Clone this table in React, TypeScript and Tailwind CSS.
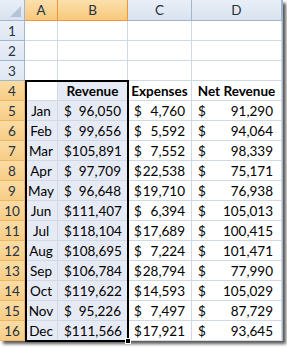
import React from "react";

const data: [string, string, string, string][] = [
  ["Jan", "96,050", "4,760", "91,290"],
  ["Feb", "99,656", "5,592", "94,064"],
  ["Mar", "105,891", "7,552", "98,339"],
  ["Apr", "97,709", "22,538", "75,171"],
  ["May", "96,648", "19,710", "76,938"],
  ["Jun", "111,407", "6,394", "105,013"],
  ["Jul", "118,104", "17,689", "100,415"],
  ["Aug", "108,695", "7,224", "101,471"],
  ["Sep", "106,784", "28,794", "77,990"],
  ["Oct", "119,622", "14,593", "105,029"],
  ["Nov", "95,226", "7,497", "87,729"],
  ["Dec", "111,566", "17,921", "93,645"],
];

const cell = "border-r border-b border-[#d0d7e5] flex items-center text-black";
const sel = "bg-[#e6eaf5]";

function RowHead({ n, active }: { n: number; active: boolean }) {
  return (
    <div
      className={
        "flex items-center justify-center border-r border-b text-[#27313f] " +
        (active
          ? "bg-gradient-to-b from-[#fbdca4] to-[#f7cd86] border-[#f2b562]"
          : "bg-gradient-to-b from-[#e9eff8] to-[#dfe7f3] border-[#9eb6ce]")
      }
    >
      {n}
    </div>
  );
}

function Money({ v, bg, pr }: { v: string; bg?: string; pr: string }) {
  return (
    <div className={cell + " justify-between pl-[6px] " + pr + " " + (bg ?? "")}>
      <span>$</span>
      <span>{v}</span>
    </div>
  );
}

export default function App() {
  return (
    <div className="w-[287px] h-[347px] bg-white relative font-['Lato','Carlito',sans-serif] text-[13.5px] leading-[20px]">
      <div className="w-[283px] h-[341px] bg-white shadow-[3px_3px_3px_rgba(0,0,0,0.65)] border-r border-[#9eb6ce] relative">
        <div className="grid grid-cols-[25px_33px_70px_64px_90px] grid-rows-[21px_repeat(16,20px)]">
          {/* header row */}
          <div className="relative border-r border-b border-[#9eb6ce] bg-gradient-to-b from-[#e9eff8] to-[#d9e2ef]">
            <svg className="absolute right-[3px] bottom-[3px]" width="11" height="11" viewBox="0 0 11 11">
              <polygon points="11,0 11,11 0,11" fill="#b4c3d6" />
            </svg>
          </div>
          <div className="flex items-center justify-center border-r border-b border-[#f29536] bg-gradient-to-b from-[#fbe0ac] to-[#f7c97c] text-[#27313f]">A</div>
          <div className="flex items-center justify-center border-r border-b border-[#f29536] bg-gradient-to-b from-[#fbe0ac] to-[#f7c97c] text-[#27313f]">B</div>
          <div className="flex items-center justify-center border-r border-b border-[#9eb6ce] bg-gradient-to-b from-[#e9eff8] to-[#d9e2ef] text-[#27313f]">C</div>
          <div className="flex items-center justify-center border-r border-b border-[#9eb6ce] bg-gradient-to-b from-[#e9eff8] to-[#d9e2ef] text-[#27313f]">D</div>

          {[1, 2, 3].map((n) => (
            <React.Fragment key={n}>
              <RowHead n={n} active={false} />
              <div className={cell} />
              <div className={cell} />
              <div className={cell} />
              <div className={cell} />
            </React.Fragment>
          ))}

          <RowHead n={4} active />
          <div className={cell + " bg-white"} />
          <div className={cell + " " + sel + " justify-center font-bold"}>Revenue</div>
          <div className={cell + " justify-center font-bold whitespace-nowrap"}>Expenses</div>
          <div className={cell + " justify-center font-bold"}>Net Revenue</div>

          {data.map((r, i) => (
            <React.Fragment key={r[0]}>
              <RowHead n={i + 5} active />
              <div className={cell + " " + sel + " justify-center"}>{r[0]}</div>
              <Money v={r[1]} bg={sel} pr="pr-[6px]" />
              <Money v={r[2]} pr="pr-[6px]" />
              <Money v={r[3]} pr="pr-[8px]" />
            </React.Fragment>
          ))}
        </div>
        {/* selection border */}
        <div className="absolute left-[25px] top-[80px] w-[104px] h-[262px] border-2 border-black pointer-events-none" />
        <div className="absolute left-[125px] top-[338px] w-[6px] h-[6px] bg-black border border-white" />
      </div>
    </div>
  );
}
